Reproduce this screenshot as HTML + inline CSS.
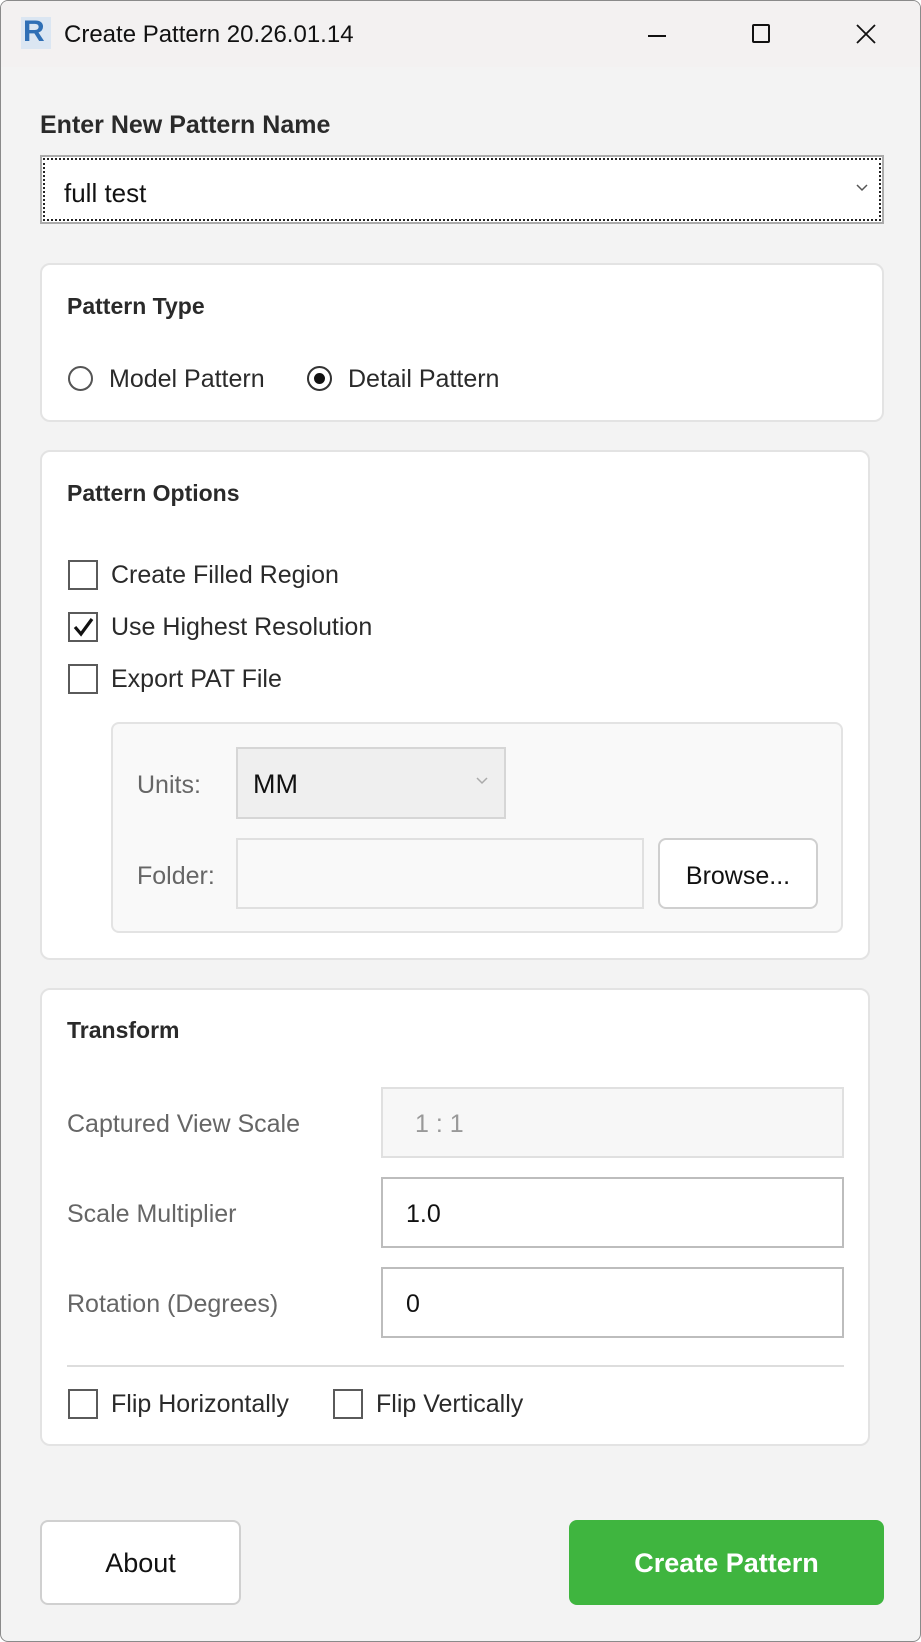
<!DOCTYPE html>
<html><head><meta charset="utf-8"><style>
*{box-sizing:border-box;margin:0;padding:0}
body{width:921px;height:1642px;background:#fff;font-family:"Liberation Sans",sans-serif;color:#222;position:relative;overflow:hidden}
.win{position:absolute;left:0;top:0;width:921px;height:1642px;background:#f3f3f3;border:1px solid #8a8a8a;border-radius:8px;overflow:hidden}
.tb{position:absolute;left:0;top:0;width:100%;height:66px;background:#f3f1f1}
.a{position:absolute;white-space:nowrap}
.t{line-height:30px;height:30px}
.card{position:absolute;background:#fff;border:2px solid #e3e3e3;border-radius:10px}
.h{font-weight:bold;font-size:23px;color:#2a2a2a}
.l{font-size:25px;color:#2a2a2a}
.g{font-size:25px;color:#666}
.cb{position:absolute;width:30px;height:30px;border:2px solid #5a5a5a;background:#fff}
.in{position:absolute;background:#fff;border:2px solid #bdbdbd}
</style></head><body>
<div class="win">
<div class="tb"></div>
<div class="a" style="left:20px;top:16px;width:30px;height:32px;background:#dbe6f2"></div>
<div class="a" style="left:22px;top:14px;font:bold 30px 'Liberation Sans',sans-serif;color:#2f6fb5;line-height:34px">R</div>
<div class="a t" style="left:63px;top:19px;font-size:24px;color:#111">Create Pattern 20.26.01.14</div>
<div class="a" style="left:647px;top:34px;width:18px;height:2px;background:#111"></div>
<div class="a" style="left:751px;top:23px;width:18px;height:19px;border:2px solid #111;border-radius:2px"></div>
<svg class="a" style="left:855px;top:23px" width="20" height="20"><path d="M1 1L19 19M19 1L1 19" stroke="#111" stroke-width="1.8"/></svg>

<div class="a t h" style="left:39px;top:109px;font-size:25px">Enter New Pattern Name</div>
<div class="in" style="left:39px;top:154px;width:844px;height:69px;border-color:#aaa"></div>
<div class="a" style="left:42px;top:157px;width:838px;height:63px;border:2px dotted #222"></div>
<div class="a t l" style="left:63px;top:177px;font-size:26px;color:#111">full test</div>
<svg class="a" style="left:855px;top:183px" width="12" height="8"><path d="M1 1L6 6L11 1" stroke="#555" fill="none" stroke-width="1.5"/></svg>

<div class="card" style="left:39px;top:262px;width:844px;height:159px"></div>
<div class="a t h" style="left:66px;top:290px">Pattern Type</div>
<div class="a" style="left:67px;top:365px;width:25px;height:25px;border:2px solid #555;border-radius:50%;background:#fff"></div>
<div class="a t l" style="left:108px;top:363px">Model Pattern</div>
<div class="a" style="left:306px;top:365px;width:25px;height:25px;border:2px solid #333;border-radius:50%;background:#fff"></div>
<div class="a" style="left:313px;top:372px;width:11px;height:11px;border-radius:50%;background:#111"></div>
<div class="a t l" style="left:347px;top:363px">Detail Pattern</div>

<div class="card" style="left:39px;top:449px;width:830px;height:510px"></div>
<div class="a t h" style="left:66px;top:477px">Pattern Options</div>
<div class="cb" style="left:67px;top:559px"></div>
<div class="a t l" style="left:110px;top:559px">Create Filled Region</div>
<div class="cb" style="left:67px;top:611px"></div>
<svg class="a" style="left:69px;top:613px" width="26" height="26"><path d="M5 13L11 20L22 5" stroke="#111" stroke-width="3.2" fill="none"/></svg>
<div class="a t l" style="left:110px;top:611px">Use Highest Resolution</div>
<div class="cb" style="left:67px;top:663px"></div>
<div class="a t l" style="left:110px;top:663px">Export PAT File</div>

<div class="a" style="left:110px;top:721px;width:732px;height:211px;background:#f9f9f9;border:2px solid #e3e3e3;border-radius:8px"></div>
<div class="a t g" style="left:136px;top:769px">Units:</div>
<div class="a" style="left:235px;top:746px;width:270px;height:72px;background:#efefef;border:2px solid #d6d6d6"></div>
<div class="a t l" style="left:252px;top:768px;font-size:27px;color:#111">MM</div>
<svg class="a" style="left:475px;top:776px" width="12" height="8"><path d="M1 1L6 6L11 1" stroke="#aaa" fill="none" stroke-width="1.5"/></svg>
<div class="a t g" style="left:136px;top:860px">Folder:</div>
<div class="a" style="left:235px;top:837px;width:408px;height:71px;background:#f9f9f9;border:2px solid #e0e0e0"></div>
<div class="a" style="left:657px;top:837px;width:160px;height:71px;background:#fff;border:2px solid #cfcfcf;border-radius:8px"></div>
<div class="a t l" style="left:657px;top:860px;width:160px;text-align:center;color:#111">Browse...</div>

<div class="card" style="left:39px;top:987px;width:830px;height:458px"></div>
<div class="a t h" style="left:66px;top:1014px">Transform</div>
<div class="a t g" style="left:66px;top:1108px">Captured View Scale</div>
<div class="a" style="left:380px;top:1086px;width:463px;height:71px;background:#f7f7f7;border:2px solid #e0e0e0"></div>
<div class="a t" style="left:414px;top:1108px;font-size:25px;color:#999">1 : 1</div>
<div class="a t g" style="left:66px;top:1198px">Scale Multiplier</div>
<div class="in" style="left:380px;top:1176px;width:463px;height:71px"></div>
<div class="a t l" style="left:405px;top:1198px;color:#111">1.0</div>
<div class="a t g" style="left:66px;top:1288px">Rotation (Degrees)</div>
<div class="in" style="left:380px;top:1266px;width:463px;height:71px"></div>
<div class="a t l" style="left:405px;top:1288px;color:#111">0</div>
<div class="a" style="left:66px;top:1364px;width:777px;height:2px;background:#ddd"></div>
<div class="cb" style="left:67px;top:1388px"></div>
<div class="a t l" style="left:110px;top:1388px">Flip Horizontally</div>
<div class="cb" style="left:332px;top:1388px"></div>
<div class="a t l" style="left:375px;top:1388px">Flip Vertically</div>

<div class="a" style="left:39px;top:1519px;width:201px;height:85px;background:#fff;border:2px solid #d0d0d0;border-radius:8px"></div>
<div class="a t" style="left:39px;top:1547px;width:201px;text-align:center;font-size:27px;color:#111">About</div>
<div class="a" style="left:568px;top:1519px;width:315px;height:85px;background:#3fb53f;border-radius:8px"></div>
<div class="a t" style="left:568px;top:1547px;width:315px;text-align:center;font-size:27px;font-weight:bold;color:#fff">Create Pattern</div>
</div>
</body></html>
